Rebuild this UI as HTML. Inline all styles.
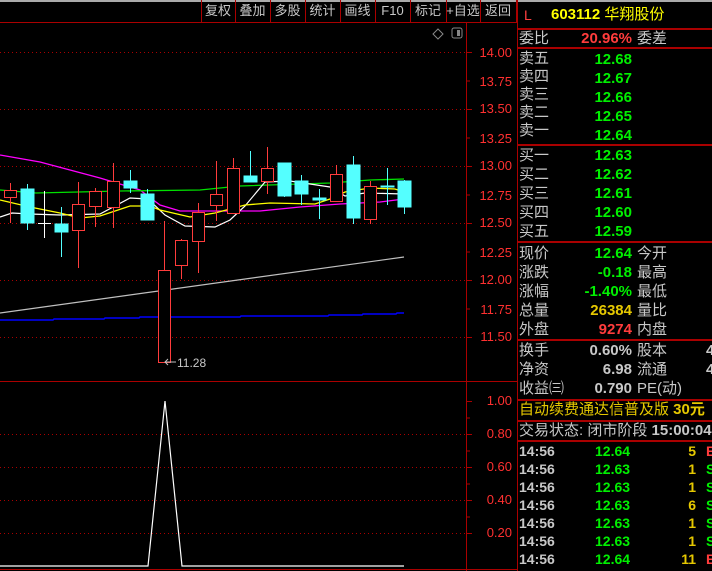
<!DOCTYPE html>
<html><head><meta charset="utf-8"><style>
*{margin:0;padding:0}
body{width:712px;height:571px;background:#000;overflow:hidden;position:relative;font-family:"Liberation Sans","Noto Sans CJK SC",sans-serif}
.t{position:absolute;white-space:nowrap;font-size:15px;line-height:18px}
.g{color:#c8c8c8}.gr{color:#00f000;font-weight:bold}.r{color:#ff3c3c;font-weight:bold}.y{color:#e6c800;font-weight:bold}
.v{text-align:right;width:100px}
.btn{position:absolute;top:2px;font-size:13px;color:#c8c8c8;line-height:18px;text-align:center}
.ax{position:absolute;right:200px;font-size:13px;color:#ff3030;line-height:14px}
.hl{position:absolute;left:517px;width:195px;height:2px;background:#a00}
</style></head><body>
<div style="position:absolute;left:0;top:0;width:712px;height:2px;background:#aaa"></div>
<svg width="712" height="571" style="position:absolute;left:0;top:0">
<g stroke="#a00" stroke-width="1" fill="none">
<line x1="0" y1="22.5" x2="517" y2="22.5"/>
<line x1="466.5" y1="22" x2="466.5" y2="571"/>
<line x1="517.5" y1="0" x2="517.5" y2="571"/>
<line x1="0" y1="381.5" x2="517" y2="381.5"/>
<line x1="0" y1="569.5" x2="517" y2="569.5"/>
<g stroke-dasharray="1,3">
<line x1="0" y1="52.5" x2="466" y2="52.5"/><line x1="0" y1="109.5" x2="466" y2="109.5"/>
<line x1="0" y1="166.5" x2="466" y2="166.5"/><line x1="0" y1="223.5" x2="466" y2="223.5"/>
<line x1="0" y1="280.5" x2="466" y2="280.5"/><line x1="0" y1="337.5" x2="466" y2="337.5"/>
<line x1="0" y1="434.5" x2="466" y2="434.5"/><line x1="0" y1="467.5" x2="466" y2="467.5"/>
<line x1="0" y1="500.5" x2="466" y2="500.5"/><line x1="0" y1="533.5" x2="466" y2="533.5"/>
</g>
<path d="M466 52.5h6M466 81h4M466 109.5h6M466 138h4M466 166.5h6M466 195h4M466 223.5h6M466 252h4M466 280.5h6M466 309h4M466 337.5h6M466 401.5h6M466 418h4M466 434.5h6M466 451h4M466 467.5h6M466 484h4M466 500.5h6M466 517h4M466 533.5h6"/>
<path d="M201.5 0v22M235.5 0v22M270.5 0v22M305.5 0v22M340.5 0v22M375.5 0v22M410.5 0v22M446.5 0v22M480.5 0v22M516.5 0v22"/>
</g>
<path d="M438 29l5 5-5 5-5-5z" stroke="#888" fill="none"/>
<rect x="452" y="28" width="10" height="10" rx="2" stroke="#888" fill="none"/><rect x="457" y="30" width="3" height="6" fill="#888"/>
<!-- MAs -->
<polyline fill="none" stroke="#c0c0c0" stroke-width="1.2" points="0,313 404,257"/>
<polyline fill="none" stroke="#0000ff" stroke-width="1.5" points="0,320 53,320 54,319 104,319 105,318 139,318 140,317 240,317 241,316 328,316 329,315 362,315 363,314 396,314 397,313 404,313"/>
<polyline fill="none" stroke="#ff00ff" stroke-width="1.3" points="0,155 40,162 100,178 140,190 160,205 180,211 260,211 300,207 340,204 380,202 404,199"/>
<polyline fill="none" stroke="#00e000" stroke-width="1.3" points="0,190 36,193 120,191 200,190 240,186 330,183 370,180 404,179"/>
<polyline fill="none" stroke="#ffffff" stroke-width="1.2" points="0,217 12,213 30,214 60,215 100,214 130,198 148,199 165,215 185,226 215,227 230,220 245,206 265,182 290,181 310,184 330,187 345,196 365,193 404,194"/>
<polyline fill="none" stroke="#ffff00" stroke-width="1.3" points="0,200 30,207 60,213 80,218 100,216 130,206 150,206 160,210 190,217 215,213 245,205 270,203 315,204 330,199 345,192 370,188 395,189 404,192"/>
<!-- candles -->
<g stroke="#ff3c3c" fill="#000" stroke-width="1">
<path d="M10.5 183v40M78.5 182v86M95.5 188v39M113.5 163v65M164.5 221v141M181.5 239v40M198.5 203v70M216.5 161v60M233.5 158v56M267.5 147v47M336.5 165v36M370.5 181v43"/>
<rect x="4.5" y="190.5" width="12" height="7"/><rect x="72.5" y="204.5" width="12" height="26"/><rect x="89.5" y="191.5" width="12" height="15"/><rect x="107.5" y="181.5" width="12" height="26"/><rect x="158.5" y="270.5" width="12" height="92"/><rect x="175.5" y="240.5" width="12" height="25"/><rect x="192.5" y="212.5" width="12" height="29"/><rect x="210.5" y="194.5" width="12" height="11"/><rect x="227.5" y="168.5" width="12" height="45"/><rect x="261.5" y="168.5" width="12" height="13"/><rect x="330.5" y="174.5" width="12" height="27"/><rect x="364.5" y="186.5" width="12" height="33"/>
</g>
<g stroke="#54ffff" fill="#54ffff">
<path d="M27.5 184v46M61.5 207v50M130.5 170v23M147.5 189v31M250.5 151v31M284.5 163v34M301.5 175v30M319.5 189v30M353.5 156v68M387.5 168v37M404.5 180v34" fill="none"/>
<rect x="21" y="189" width="13" height="34"/><rect x="55" y="224" width="13" height="8"/><rect x="124" y="181" width="13" height="7"/><rect x="141" y="194" width="13" height="26"/><rect x="244" y="176" width="13" height="6"/><rect x="278" y="163" width="13" height="33"/><rect x="295" y="181" width="13" height="13"/><rect x="313" y="198" width="13" height="2"/><rect x="347" y="165" width="13" height="53"/><rect x="381" y="186" width="13" height="1"/><rect x="398" y="181" width="13" height="26"/>
</g>
<path d="M44.5 191v47M38 223.5h13" stroke="#fff"/>
<path d="M165 362h11M168 359l-3 3 3 3" stroke="#c0c0c0" fill="none"/>
<text x="177" y="367" fill="#c8c8c8" font-size="12" font-family="Liberation Sans">11.28</text>
<polyline fill="none" stroke="#fff" stroke-width="1.2" points="0,566 148,566 165,401 182,566 404,566"/>
</svg>
<div class="btn" style="left:201px;width:34px">复权</div><div class="btn" style="left:235px;width:35px">叠加</div><div class="btn" style="left:270px;width:35px">多股</div><div class="btn" style="left:305px;width:35px">统计</div><div class="btn" style="left:340px;width:35px">画线</div><div class="btn" style="left:375px;width:35px">F10</div><div class="btn" style="left:410px;width:36px">标记</div><div class="btn" style="left:446px;width:34px">+自选</div><div class="btn" style="left:480px;width:36px">返回</div>
<div class="ax" style="top:46px">14.00</div><div class="ax" style="top:75px">13.75</div><div class="ax" style="top:102px">13.50</div><div class="ax" style="top:132px">13.25</div><div class="ax" style="top:159px">13.00</div><div class="ax" style="top:189px">12.75</div><div class="ax" style="top:216px">12.50</div><div class="ax" style="top:246px">12.25</div><div class="ax" style="top:273px">12.00</div><div class="ax" style="top:303px">11.75</div><div class="ax" style="top:330px">11.50</div>
<div class="ax" style="top:394px">1.00</div><div class="ax" style="top:427px">0.80</div><div class="ax" style="top:460px">0.60</div><div class="ax" style="top:493px">0.40</div><div class="ax" style="top:526px">0.20</div>
<!-- right panel -->
<div class="hl" style="top:28px"></div><div class="hl" style="top:47px"></div><div class="hl" style="top:144px"></div><div class="hl" style="top:241px"></div><div class="hl" style="top:339px"></div><div class="hl" style="top:399px"></div><div class="hl" style="top:420px"></div><div class="hl" style="top:440px"></div>
<div class="t" style="left:524px;top:6px;color:#ff4040;font-size:14px">L</div>
<div class="t" style="left:551px;top:6px;color:#ffff00;font-size:15px"><b>603112</b> 华翔股份</div>
<div class="t g" style="left:519px;top:30px">委比</div><div class="t r v" style="left:532px;top:30px">20.96%</div><div class="t g" style="left:637px;top:30px">委差</div>
<div class="t g" style="left:519px;top:50px">卖五<br>卖四<br>卖三<br>卖二<br>卖一</div>
<div class="t gr v" style="left:532px;top:50px;line-height:19px">12.68<br>12.67<br>12.66<br>12.65<br>12.64</div>
<div class="t g" style="left:519px;top:146px;line-height:19px">买一<br>买二<br>买三<br>买四<br>买五</div>
<div class="t gr v" style="left:532px;top:146px;line-height:19px">12.63<br>12.62<br>12.61<br>12.60<br>12.59</div>
<div class="t g" style="left:519px;top:244px;line-height:19px">现价<br>涨跌<br>涨幅<br>总量<br>外盘</div>
<div class="t v" style="left:532px;top:244px;line-height:19px;font-weight:bold"><span style="color:#00f000">12.64<br>-0.18<br>-1.40%</span><br><span style="color:#e6c800">26384</span><br><span style="color:#ff3c3c">9274</span></div>
<div class="t g" style="left:637px;top:244px;line-height:19px">今开<br>最高<br>最低<br>量比<br>内盘</div>
<div class="t g" style="left:519px;top:341px;line-height:19px">换手<br>净资<br>收益㈢</div>
<div class="t v" style="left:532px;top:341px;line-height:19px;color:#c8c8c8;font-weight:bold">0.60%<br>6.98<br>0.790</div>
<div class="t g" style="left:637px;top:341px;line-height:19px">股本<br>流通<br>PE(动)</div>
<div class="t g" style="left:706px;top:341px;line-height:19px;font-weight:bold">4<br>4</div>
<div class="t" style="left:519px;top:401px;color:#e6c800">自动续费通达信普及版 <b>30元</b></div>
<div class="t g" style="left:519px;top:422px">交易状态: 闭市阶段 <b>15:00:04</b></div>
<div class="t g" style="left:519px;top:442px;line-height:18px;font-weight:bold;font-size:14px">14:56<br>14:56<br>14:56<br>14:56<br>14:56<br>14:56<br>14:56</div>
<div class="t gr" style="left:595px;top:442px;line-height:18px;font-size:14px">12.64<br>12.63<br>12.63<br>12.63<br>12.63<br>12.63<br>12.64</div>
<div class="t y" style="left:650px;top:442px;line-height:18px;font-size:14px;width:46px;text-align:right">5<br>1<br>1<br>6<br>1<br>1<br>11</div>
<div class="t" style="left:706px;top:442px;line-height:18px;font-size:14px;font-weight:bold"><span style="color:#ff3c3c">B</span><br><span style="color:#00f000">S<br>S<br>S<br>S<br>S</span><br><span style="color:#ff3c3c">B</span></div>
</body></html>
